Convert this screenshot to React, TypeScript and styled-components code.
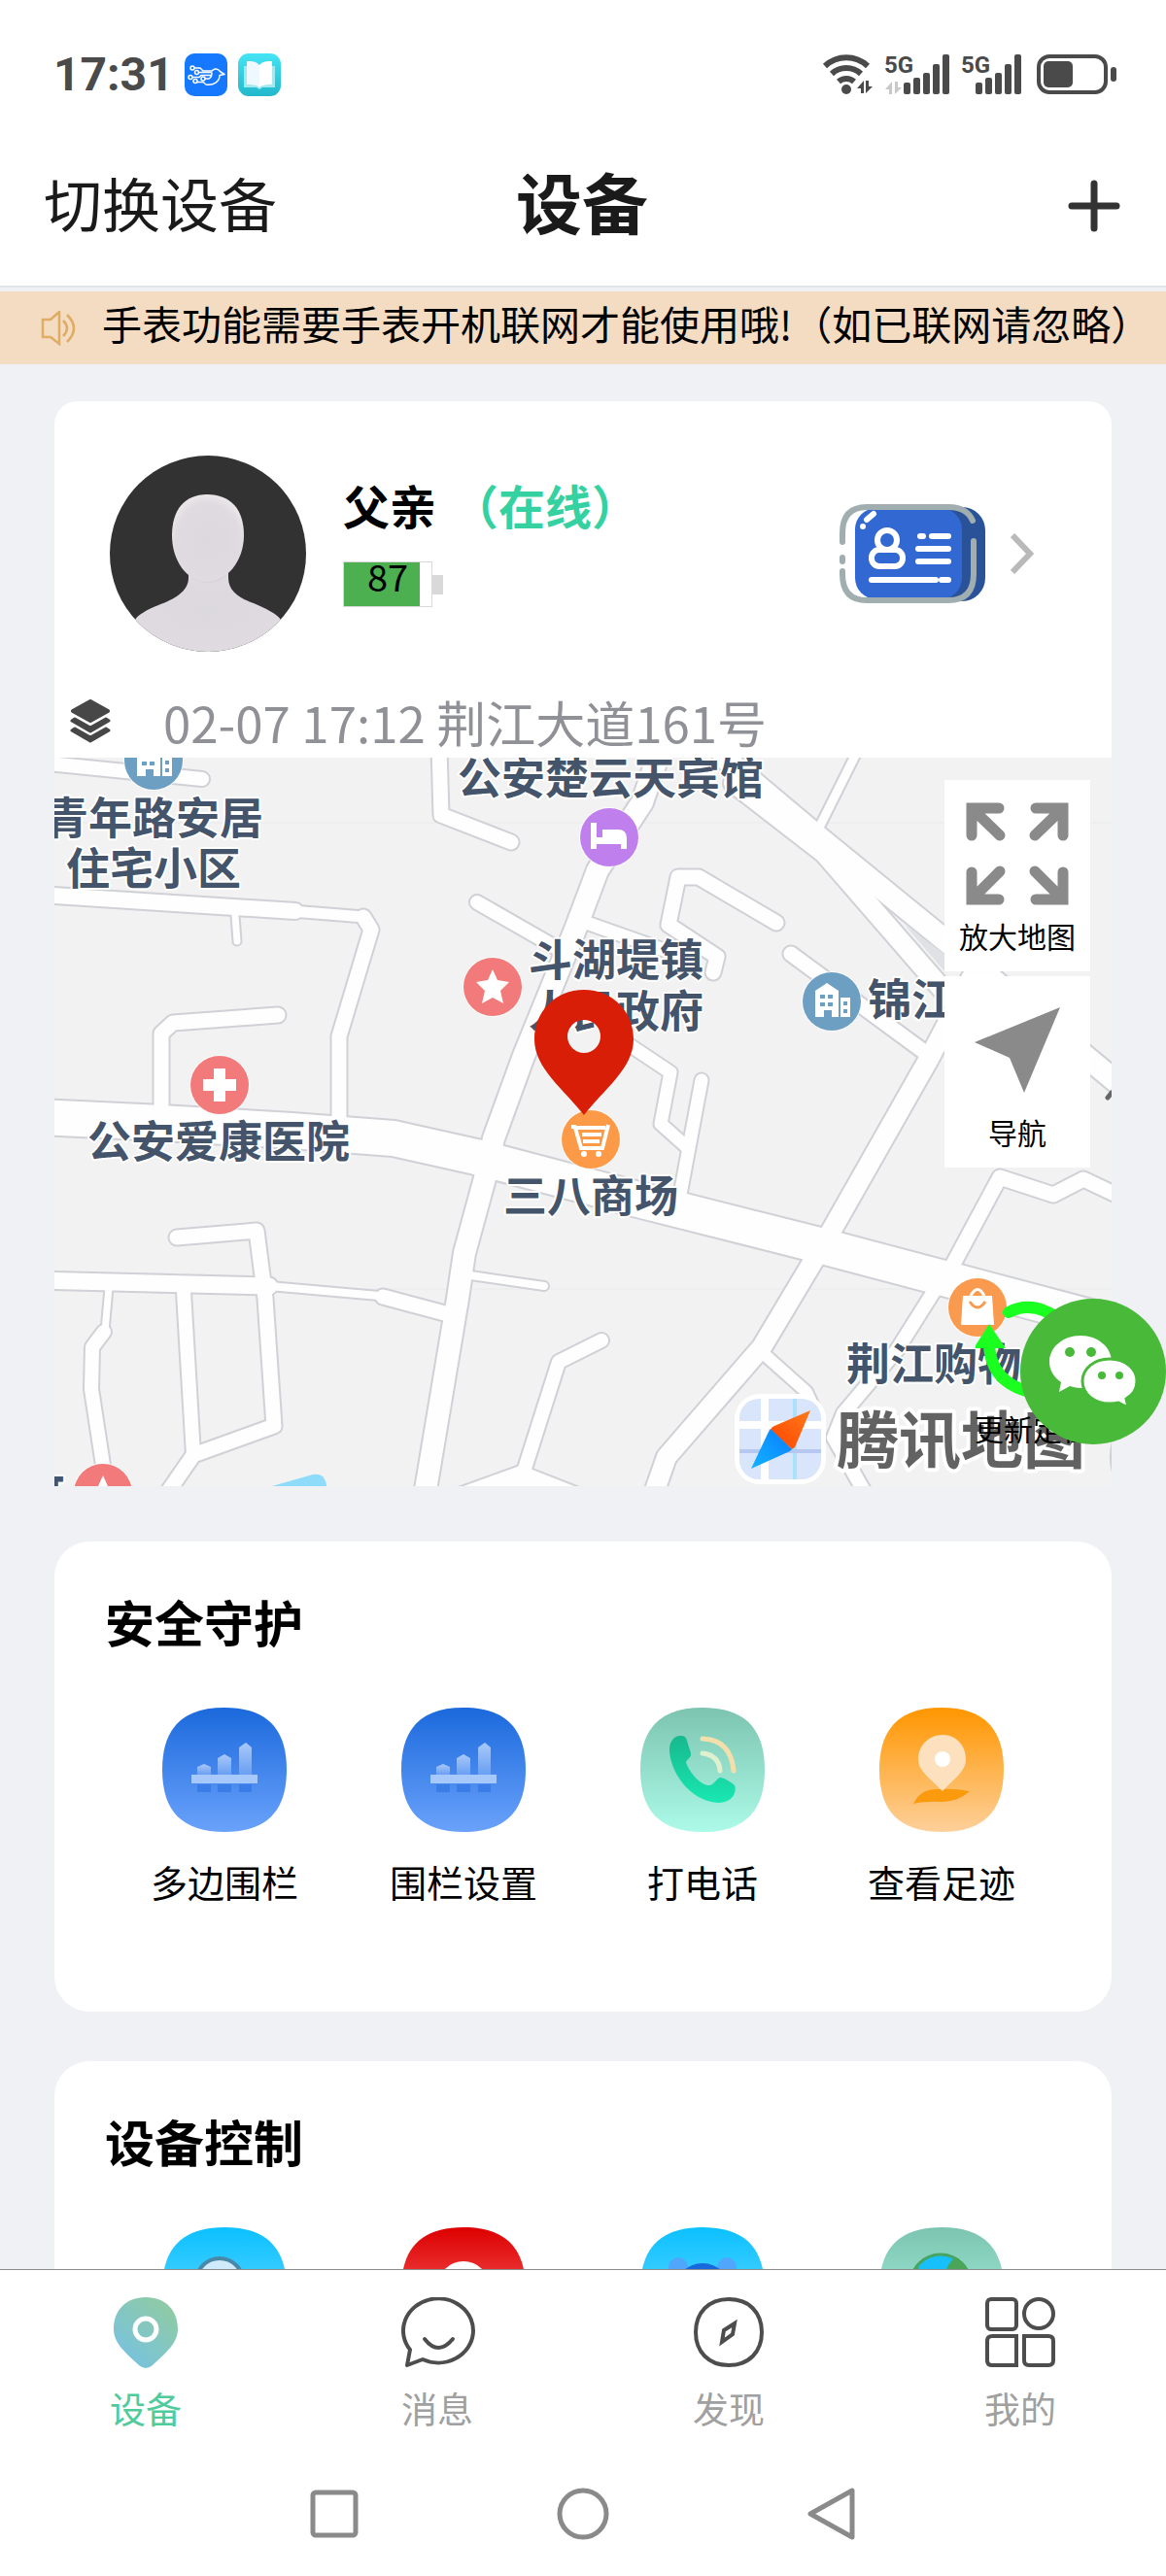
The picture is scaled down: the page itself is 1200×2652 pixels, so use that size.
import React from 'react';
import styled, { createGlobalStyle } from 'styled-components';

const GlobalStyle = createGlobalStyle`
  *, *::before, *::after { box-sizing: border-box; }
  html, body { margin: 0; padding: 0; }
  body {
    font-family: 'Noto Sans CJK SC', 'Noto Sans', sans-serif;
    color: #000;
    background: #fff;
  }
  button {
    font: inherit;
    color: inherit;
    background: none;
    border: 0;
    padding: 0;
    margin: 0;
    cursor: pointer;
  }
  h1, h2, p { margin: 0; }
  svg { display: block; flex: none; }
`;

/* ---------- shell ---------- */

const Screen = styled.div`
  display: flex;
  flex-direction: column;
  height: 100vh;
  background: #fff;
`;

const StatusBar = styled.div`
  display: flex;
  align-items: center;
  justify-content: space-between;
  height: 130px;
  padding: 23px 51px 0 55px;
  color: #4a4a4a;

  svg { overflow: visible; }
`;

const StatusGroup = styled.div<{ $gap: number }>`
  display: flex;
  align-items: center;
  gap: ${(p) => p.$gap}px;
`;

const Clock = styled.time`
  font-family: Roboto, 'Noto Sans', sans-serif;
  font-size: 48px;
  line-height: 56px;
  font-weight: 700;
`;

const Header = styled.header`
  display: grid;
  grid-template-columns: 1fr auto 1fr;
  align-items: center;
  height: 166px;
  padding: 0 47px 0 45px;
  border-bottom: 2px solid #e0e5ea;
  color: #1a1a1a;
`;

const SwitchButton = styled.button`
  justify-self: start;
  font-size: 60px;
  line-height: 80px;
  padding-bottom: 8px;
`;

const Title = styled.h1`
  font-size: 68px;
  line-height: 80px;
  font-weight: 700;
  padding-bottom: 10px;
`;

const AddButton = styled.button`
  justify-self: end;
`;

const Body = styled.main`
  position: relative;
  flex: 1;
  min-height: 0;
  display: flex;
  flex-direction: column;
  padding-top: 4px;
  background: #f0f1f5;
`;

const Notice = styled.p`
  display: flex;
  gap: 27px;
  flex: none;
  height: 75px;
  padding: 0 42px;
  background: #f3dcc2;
  font-size: 41px;
  line-height: 64px;
  white-space: nowrap;

  svg { align-self: center; }
`;

const Scroller = styled.div`
  flex: 1;
  min-height: 0;
  overflow-y: auto;
  scrollbar-width: none;
  padding: 38px 56px 56px;
`;

/* ---------- device card ---------- */

const DeviceCard = styled.section`
  background: #fff;
  border-radius: 24px 24px 0 0;
  margin-bottom: 57px;
`;

const Profile = styled.div`
  display: flex;
  gap: 38px;
  padding: 56px 80px 0 57px;
`;

const ProfileInfo = styled.div`
  flex: 1;
  padding-top: 20px;
`;

const NameLine = styled.h2`
  display: flex;
  gap: 16px;
  font-size: 48px;
  line-height: 60px;
  font-weight: 700;
`;

const Online = styled.span`
  color: #36d1a0;
`;

const Battery = styled.div`
  display: flex;
  align-items: center;
  margin-top: 29px;
`;

const BatteryShell = styled.div`
  display: grid;
  width: 92px;
  height: 47px;
  border: 1px solid #d9d9d9;

  > * { grid-area: 1 / 1; }
`;

const BatteryFill = styled.div`
  background: #4caf50;
`;

const BatteryValue = styled.span`
  justify-self: center;
  font-size: 38px;
  line-height: 28px;
`;

const BatteryNub = styled.div`
  width: 11px;
  height: 20px;
  background: #d9d9d9;
`;

const CardLink = styled.button`
  display: flex;
  align-items: center;
  gap: 26px;
`;

const Address = styled.div`
  display: flex;
  align-items: center;
  gap: 54px;
  height: 109px;
  padding: 34px 16px 0;
  font-size: 51px;
  line-height: 70px;
  color: #909196;
  white-space: nowrap;
`;

/* ---------- map ---------- */

const MapBox = styled.div`
  position: relative;
  height: 750px;
  overflow: hidden;
  background: #f1f2f1;
`;

const MapTools = styled.div`
  position: absolute;
  top: 23px;
  right: 22px;
  display: flex;
  flex-direction: column;
  align-items: flex-end;
  gap: 5px;
`;

const MapTool = styled.button<{ $clear?: boolean }>`
  display: flex;
  flex-direction: column;
  align-items: center;
  gap: 7px;
  width: ${(p) => (p.$clear ? '118px' : '150px')};
  height: 197px;
  padding-top: 17px;
  background: ${(p) => (p.$clear ? 'transparent' : '#fff')};
  font-size: 30px;
  line-height: 36px;
  white-space: nowrap;
`;

const MapToolSpace = styled.div`
  height: 98px;
`;

const ChatButton = styled.button`
  position: absolute;
  top: 1041px;
  right: 0;
  width: 150px;
  height: 150px;
`;

/* ---------- feature cards ---------- */

const FeatureCard = styled.section`
  background: #fff;
  border-radius: 36px;
  padding: 52px 52px 109px;
  margin-bottom: 51px;
`;

const FeatureTitle = styled.h2`
  font-size: 51px;
  line-height: 60px;
  font-weight: 700;
`;

const FeatureGrid = styled.div`
  display: grid;
  grid-template-columns: repeat(4, 1fr);
  margin-top: 59px;
`;

const Feature = styled.button`
  display: flex;
  flex-direction: column;
  align-items: center;
  gap: 26px;
  font-size: 38px;
  line-height: 50px;
`;

/* ---------- bottom bars ---------- */

const TabBar = styled.nav`
  display: grid;
  grid-template-columns: repeat(4, 1fr);
  padding: 28px 0 20px;
  border-top: 1px solid #8c8c8c;
  background: #fff;
`;

const Tab = styled.button<{ $active?: boolean }>`
  display: flex;
  flex-direction: column;
  align-items: center;
  gap: 16px;
  font-size: 37px;
  line-height: 50px;
  color: ${(p) => (p.$active ? '#4fcb9c' : '#a0a0a0')};
`;

const SystemNav = styled.nav`
  display: flex;
  align-items: center;
  justify-content: center;
  gap: 202px;
  height: 128px;
  background: #fff;
`;

/* ---------- status icons ---------- */

const BirdApp = () => (
  <svg width="44" height="44" viewBox="0 0 44 44">
    <rect width="44" height="44" rx="10" fill="#1677ff" />
    <g fill="none" stroke="#fff" strokeWidth="1.5" strokeLinejoin="round" strokeLinecap="round">
      <circle cx="8" cy="15" r="2" />
      <circle cx="12.5" cy="19.5" r="2" />
      <circle cx="6" cy="24.5" r="2" />
      <circle cx="11" cy="28.5" r="2" />
      <circle cx="19" cy="26" r="2" />
      <path d="M10 15h6l3 3h9c3-3 6-2.500 9 1l4 2.500-5 1C36 29 30 33 22 32l-3-2.500h-6" />
      <path d="M14.500 19.500H27M8 24.500h7l2-2h10M21 26h4c2-1 3-3 3-6" />
    </g>
  </svg>
);

const BookApp = () => (
  <svg width="44" height="44" viewBox="0 0 44 44">
    <defs>
      <linearGradient id="book" x1="0" y1="0" x2="0" y2="1">
        <stop offset="0" stopColor="#45e4f5" />
        <stop offset="1" stopColor="#22b8cb" />
      </linearGradient>
    </defs>
    <rect width="44" height="44" rx="11" fill="url(#book)" />
    <path d="M6 13h32v22H25l-3 2-3-2H6z" fill="#a5e9f0" />
    <path d="M9 8c5 0 10 0 13 4v23c-3-3-8-3-13-3z" fill="#eef9ff" />
    <path d="M35 8c-5 0-10 0-13 4v23c3-3 8-3 13-3z" fill="#fff" />
  </svg>
);

const Wifi = () => (
  <svg width="51" height="41" viewBox="0 0 51 41">
    <g fill="none" stroke="#4a4a4a" strokeWidth="6">
      <path d="M2 12A32 32 0 0 1 46 12" />
      <path d="M9 20A22 22 0 0 1 39 20" />
      <path d="M16 28A12 12 0 0 1 32 28" />
    </g>
    <circle cx="24" cy="36" r="5" fill="#4a4a4a" />
    <path d="M42 27v13h-3v-5h-4zM44 27h3v6h4l-7 7z" fill="#4a4a4a" />
  </svg>
);

const Signal = ({ start, data }: { start: number; data?: boolean }) => (
  <svg width={start + 47} height="41" viewBox={`0 0 ${start + 47} 41`}>
    <text x="0" y="19" fontFamily="Roboto, sans-serif" fontSize="24" fontWeight="700" fill="#4a4a4a">5G</text>
    {data && <path d="M8 28v13H5v-5H1zM11 28h3v6h4l-7 7z" fill="#c8c8c8" />}
    {[12, 17, 22, 31, 41].map((h, i) => (
      <rect key={h} x={start + i * 10} y={41 - h} width="7" height={h} rx="2" fill="#4a4a4a" />
    ))}
  </svg>
);

const PhoneBattery = () => (
  <svg width="86" height="41" viewBox="-4 0 86 41">
    <rect x="2" y="2" width="69" height="37" rx="11" fill="none" stroke="#4a4a4a" strokeWidth="4" />
    <rect x="7" y="7" width="30" height="27" rx="5" fill="#4a4a4a" />
    <rect x="76" y="13" width="6" height="15" rx="3" fill="#4a4a4a" />
  </svg>
);

/* ---------- header and profile icons ---------- */

const Plus = () => (
  <svg width="54" height="54" viewBox="0 0 54 54" stroke="#333" strokeWidth="7" strokeLinecap="round">
    <path d="M27 4v46M4 27h46" />
  </svg>
);

const Speaker = () => (
  <svg width="36" height="36" viewBox="0 0 36 36" fill="none" stroke="#e0ab62" strokeWidth="2.5">
    <path d="M2 9h8l9-8v33L10 27H2z" />
    <path d="M23 10q8 8 0 16M27 4q14 14 0 28" />
  </svg>
);

const Avatar = () => (
  <svg width="202" height="202" viewBox="0 0 202 202">
    <defs>
      <clipPath id="face"><circle cx="101" cy="101" r="101" /></clipPath>
      <radialGradient id="skin" cx="0.5" cy="0.55" r="0.6">
        <stop offset="0" stopColor="#dbd8de" />
        <stop offset="0.75" stopColor="#dfdbe0" />
        <stop offset="1" stopColor="#f1ecec" />
      </radialGradient>
    </defs>
    <g clipPath="url(#face)">
      <rect width="202" height="202" fill="#323232" />
      <path
        d="M81 108v18c0 14-15 22-31 28-12 5-20 9-24 15L10 202h180l-14-33c-4-6-16-12-28-17-14-5-26-12-26-26v-18z"
        fill="url(#skin)"
      />
      <path d="M82 124q19 14 38 0l2-10H81z" fill="#cfccd1" opacity="0.6" />
      <path
        d="M100 40c25 0 38 16 38 42 0 27-18 48-38 48S64 109 64 82c0-26 13-42 36-42z"
        fill="url(#skin)"
      />
    </g>
  </svg>
);

const IdCard = () => (
  <svg width="150" height="102" viewBox="0 0 150 102" fill="none" strokeLinecap="round">
    <rect x="40" y="3" width="110" height="97" rx="24" fill="#2a5298" />
    <rect x="16" y="4" width="110" height="94" rx="22" fill="#3268d2" />
    <g stroke="#a0aeb0" strokeWidth="6">
      <path d="M3 39V30Q3 3 28 3H112Q131 3 137 17" />
      <path d="M138 38V72Q138 99 112 99H28Q3 99 3 72V69" />
      <path d="M3 55V59" />
    </g>
    <g stroke="#fff" strokeWidth="6">
      <path d="M28 16L35 10M24 23h0M83 33h3M95 33h17M81 46h31M81 59h31M33 78h66M105 78h7" />
      <circle cx="49" cy="37" r="10" />
      <rect x="33" y="47" width="32" height="17" rx="8" fill="#3268d2" />
    </g>
  </svg>
);

const Chevron = () => (
  <svg width="24" height="42" viewBox="0 0 24 42" fill="none" stroke="#b9b9b9" strokeWidth="6">
    <path d="M2 2l18 19L2 40" />
  </svg>
);

const Layers = () => (
  <svg width="42" height="45" viewBox="0 0 42 45" fill="#474747" stroke="#474747" strokeLinejoin="round">
    <path d="M21 2l18 10-18 10L3 12z" strokeWidth="4" />
    <path d="M2 22l3-2 16 9 16-9 3 2-19 11z" strokeWidth="3" />
    <path d="M2 32l3-2 16 9 16-9 3 2-19 11z" strokeWidth="3" />
  </svg>
);

/* ---------- map drawing ---------- */

type Road = [string, number];

const roads: Road[] = [
  ['M40 785L208 802', 14],
  ['M40 921L304 938', 16],
  ['M300 938L375 944', 11],
  ['M374 944L382 957L349 1067V1156', 15],
  ['M242 942L244 969', 7],
  ['M166 1150V1064L178 1053L286 1045', 15],
  ['M680 770L661 826L615 896L592 957L539 1087L508 1172L499 1213L478 1290L471 1337L437 1540', 22],
  ['M484 1313L560 1324', 8],
  ['M40 1318L277 1324', 17],
  ['M277 1324L390 1334', 8],
  ['M394 1335L465 1354', 15],
  ['M182 1274L264 1267L273 1337L282 1468L199 1498L170 1540', 15],
  ['M189 1330L199 1498', 14],
  ['M112 1326L108 1370', 7],
  ['M107 1371L95 1387L94 1430L107 1515', 14],
  ['M619 1380L575 1402L539 1515L470 1540M539 1517L610 1545', 14],
  ['M452 770L454 839L526 867', 15],
  ['M491 929L573 976', 14],
  ['M598 948L700 984', 13],
  ['M745 780L845 864L985 978L1160 1123', 22],
  ['M755 806L848 878L985 1036', 20],
  ['M884 770L843 852', 9],
  ['M799 950L719 903H698L688 952L738 985L734 1001', 15],
  ['M814 982L954 1085', 15],
  ['M1000 1006L956 1090L855 1268L784 1387L686 1500L672 1540', 20],
  ['M645 1074L690 1104L680 1157L708 1182', 13],
  ['M722 1112L699 1235', 13],
  ['M1155 1233L1115 1214L1084 1230L1029 1212L979 1305', 15],
  ['M962 1328L923 1390L868 1455L858 1480L892 1540', 14],
  ['M784 1392L830 1433L838 1450', 12],
  ['M1158 1470Q1142 1500 1158 1530', 12],
  ['M40 1150L166 1156L300 1164L405 1172L490 1191L657 1235L843 1282L1160 1366', 36],
];

const StarMark = () => (
  <path d="M0-18l5 11 12 2-9 9 3 13-11-6-11 6 3-13-9-9 12-2z" fill="#fff" />
);

const BuildingMark = () => (
  <>
    <path d="M-17 16v-27L-5-19 7-11v27H0V9h-8v7zM9-4h10v20H9z" fill="#fff" />
    <path d="M-12-7h5v4h-5zM-4-7h5v4h-5zM-12 1h5v4h-5zM-4 1h5v4h-5zM12 0h4v4h-4zM12 8h4v4h-4z" fill="#6d9fc3" />
  </>
);

const Poi = ({ x, y, color, children }: { x: number; y: number; color: string; children: React.ReactNode }) => (
  <g transform={`translate(${x} ${y})`}>
    <circle r="31" fill="#fff" opacity="0.7" />
    <circle r="30" fill={color} />
    {children}
  </g>
);

const labels: [number, number, string][] = [
  [46, 859, '青年路安居'],
  [68, 911, '住宅小区'],
  [471, 818, '公安楚云天宾馆'],
  [90, 1192, '公安爱康医院'],
  [544, 1005, '斗湖堤镇'],
  [544, 1058, '人民政府'],
  [893, 1046, '锦江'],
  [518, 1248, '三八商场'],
  [871, 1421, '荆江购物'],
  [22, 1556, '可'],
];

const MapDrawing = () => (
  <svg width="100%" height="100%" viewBox="56 780 1088 750" preserveAspectRatio="xMidYMid slice">
    <defs>
      <clipPath id="logoTile"><rect x="761" y="1440" width="84" height="83" rx="20" /></clipPath>
      <linearGradient id="needleHot" x1="1" y1="0" x2="0" y2="1">
        <stop offset="0" stopColor="#ff7a1a" />
        <stop offset="1" stopColor="#ff4400" />
      </linearGradient>
      <linearGradient id="needleCold" x1="1" y1="0" x2="0" y2="1">
        <stop offset="0" stopColor="#0a7cff" />
        <stop offset="1" stopColor="#12b4ff" />
      </linearGradient>
    </defs>
    <path d="M56 847H1144M56 1327H1144" stroke="#e9eaea" />
    <g fill="none" strokeLinecap="round" strokeLinejoin="round">
      {roads.map(([d, w]) => <path key={d} d={d} stroke="#d0d1d7" strokeWidth={w + 4} />)}
      {roads.map(([d, w]) => <path key={d} d={d} stroke="#fefefe" strokeWidth={w} />)}
    </g>
    <path d="M500 1530L537 1512L575 1530z" fill="#fefefe" />
    <path d="M931 952L973 1001V983z" fill="#dfe1e5" />
    <path d="M280 1530l42-12q13-2 14 12z" fill="#8fdcfa" />
    <path d="M1140 1130l4-5" stroke="#666" strokeWidth="5" strokeLinecap="round" />

    <Poi x={158} y={783} color="#6d9fc3"><BuildingMark /></Poi>
    <Poi x={856} y={1031} color="#6d9fc3"><BuildingMark /></Poi>
    <Poi x={627} y={862} color="#bf80ee">
      <path d="M-19-15h6V0h6v-8H9q9 0 9 9v11h-6V7h-25v5h-6z" fill="#fff" />
    </Poi>
    <Poi x={507} y={1016} color="#f27a7a"><StarMark /></Poi>
    <Poi x={106} y={1537} color="#f27a7a"><StarMark /></Poi>
    <Poi x={226} y={1117} color="#f27a7a">
      <path d="M-6-17H6V-6H17V6H6V17H-6V6H-17V-6H-6z" fill="#fff" />
    </Poi>
    <Poi x={608} y={1173} color="#fd9a48">
      <path d="M-20-13h5M18-15l-6 24H-10L-16-12H15M-9-5H11M-8 2H9" fill="none" stroke="#fff" strokeWidth="4" />
      <circle cx="-7" cy="15" r="3" fill="#fff" />
      <circle cx="8" cy="15" r="3" fill="#fff" />
    </Poi>
    <Poi x={1006} y={1346} color="#f99a4e">
      <path d="M-15-12H15l2 30H-17z" fill="#fff" />
      <path d="M-7-12q7-13 14 0" fill="none" stroke="#fff" strokeWidth="3" />
      <path d="M-8-6Q0 6 8-6" fill="none" stroke="#f99a4e" strokeWidth="3" />
    </Poi>

    <g fontFamily="'Noto Sans CJK SC', sans-serif" fontSize="45" fontWeight="700" fill="#44546a"
      stroke="#fff" strokeWidth="4" strokeLinejoin="round" paintOrder="stroke">
      {labels.map(([x, y, t]) => <text key={t} x={x} y={y}>{t}</text>)}
    </g>

    <path
      d="M601 1019C571 1019 550 1042 550 1070C550 1100 581 1122 601 1148C621 1122 652 1100 652 1070C652 1042 631 1019 601 1019ZM601 1050A17 17 0 1 1 601 1084A17 17 0 1 1 601 1050Z"
      fill="#d81e06"
      fillRule="evenodd"
    />

    <rect x="756" y="1435" width="94" height="93" rx="26" fill="#fff" />
    <g clipPath="url(#logoTile)">
      <rect x="761" y="1440" width="84" height="83" fill="#d9e5fb" />
      <path d="M787 1440V1523M761 1467H845" stroke="#fff" strokeWidth="8" />
      <path d="M818 1440V1523" stroke="#a9e2fa" strokeWidth="4" />
      <path d="M761 1494H845" stroke="#b7c8f0" strokeWidth="4" />
    </g>
    <path d="M834 1452L797 1468Q794 1469 793 1472L815 1492L818 1490z" fill="url(#needleHot)" />
    <path d="M793 1471L815 1492L813 1494L773 1512L791 1474z" fill="url(#needleCold)" />
    <text x="861" y="1506" fontFamily="'Noto Sans CJK SC', sans-serif" fontSize="64" fontWeight="700"
      fill="#626262" stroke="#fff" strokeWidth="8" strokeLinejoin="round" paintOrder="stroke">腾讯地图</text>
  </svg>
);

const Expand = () => (
  <svg width="118" height="118" viewBox="-6 -6 118 118" fill="none" stroke="#8a8a8a" strokeWidth="11" strokeLinecap="round" strokeLinejoin="miter">
    <path d="M34 6H6V34M6 6L35 34" />
    <path d="M72 6H100V34M100 6L71 34" />
    <path d="M34 100H6V72M6 100L35 71" />
    <path d="M72 100H100V72M100 100L71 71" />
  </svg>
);

const Navigate = () => (
  <svg width="118" height="118" viewBox="0 0 118 118" fill="#8a8a8a">
    <path d="M103 15L15 51L51 67L66 103z" />
  </svg>
);

const Refresh = () => (
  <svg width="118" height="118" viewBox="0 0 118 118" fill="none" stroke="#1aff1f" strokeWidth="12">
    <path d="M34 24Q60 10 90 34" strokeLinecap="round" />
    <path d="M14 58Q16 96 56 106" />
    <path d="M14 36l17 25H-2z" fill="#1aff1f" stroke="none" />
  </svg>
);

const Chat = () => (
  <svg width="150" height="150" viewBox="0 0 150 150">
    <circle cx="75" cy="75" r="75" fill="#48b938" />
    <path d="M62 38c-18 0-32 12-32 27 0 9 5 16 12 21l-2 10 11-6q6 2 11 2c18 0 32-12 32-27S80 38 62 38z" fill="#fff" />
    <path
      d="M92 62c-16 0-28 10-28 23s12 23 28 23q5 0 9-1l10 5-2-9c7-4 11-10 11-18 0-13-12-23-28-23z"
      fill="#fff" stroke="#48b938" strokeWidth="3"
    />
    <g fill="#48b938">
      <circle cx="51" cy="55" r="5" />
      <circle cx="73" cy="55" r="5" />
      <circle cx="84" cy="79" r="4" />
      <circle cx="102" cy="79" r="4" />
    </g>
  </svg>
);

/* ---------- feature icons ---------- */

const Tile = ({ id, from, to, children }: { id: string; from: string; to: string; children?: React.ReactNode }) => (
  <svg width="128" height="128" viewBox="0 0 128 128">
    <defs>
      <linearGradient id={id} x1="0" y1="0" x2="0" y2="1">
        <stop offset="0" stopColor={from} />
        <stop offset="1" stopColor={to} />
      </linearGradient>
    </defs>
    <path d="M64 0C107 0 128 21 128 64S107 128 64 128 0 107 0 64 21 0 64 0Z" fill={`url(#${id})`} />
    {children}
  </svg>
);

const FenceTile = ({ id }: { id: string }) => (
  <Tile id={id} from="#1b69dc" to="#6aa2fb">
    <defs>
      <linearGradient id={`${id}-post`} x1="0" y1="0" x2="0" y2="1">
        <stop offset="0" stopColor="#a9c9fa" />
        <stop offset="1" stopColor="#6a9ff2" />
      </linearGradient>
    </defs>
    <g fill={`url(#${id}-post)`}>
      <path d="M36 61l7-3 7 3v8H36z" />
      <path d="M57 52l7-4 7 4v17H57z" />
      <path d="M79 41l7-5 6 5v28H79z" />
    </g>
    <path d="M36 79h14v8H36zM57 79h14v8H57zM79 79h13v8H79z" fill="#3a7de6" />
    <path d="M30 69h68v9H30z" fill="#a6c8fa" />
  </Tile>
);

const CallTile = () => (
  <Tile id="call" from="#7cc4b0" to="#acfae8">
    <defs>
      <linearGradient id="handset" x1="0" y1="0" x2="0" y2="1">
        <stop offset="0" stopColor="#17b88d" />
        <stop offset="1" stopColor="#19e8b2" />
      </linearGradient>
    </defs>
    <path
      d="M30 43c0-8 5-14 11-14 4 0 6 1 7 5l4 13c1 4-4 6-5 9 2 9 15 24 23 24 5 1 8-7 12-8 4 0 12 5 15 8 2 3 1 18-17 18-30-2-50-33-50-55z"
      fill="url(#handset)"
    />
    <g fill="none" strokeWidth="5" strokeLinecap="round">
      <path d="M64 47q17 2 18 18" stroke="#dff0cf" />
      <path d="M64 32q29 1 32 33" stroke="#f3dfac" />
    </g>
  </Tile>
);

const TrackTile = () => (
  <Tile id="track" from="#ff9600" to="#fdd09a">
    <path d="M35 99q7-15 24-15 18-1 34 2-10 10-28 11-18-1-30 2z" fill="#fb9a0c" />
    <path d="M65 28c-14 0-25 11-25 25 0 13 13 20 25 33 12-13 24-20 24-33 0-14-10-25-24-25z" fill="#fde0bd" />
    <circle cx="65" cy="53" r="8" fill="#fff" />
  </Tile>
);

const FindTile = () => (
  <Tile id="find" from="#0cc0ff" to="#7ee0ff">
    <circle cx="59" cy="56" r="24" fill="#cfeafb" stroke="#4a88a8" strokeWidth="4" />
    <path d="M77 74l16 16" stroke="#4a88a8" strokeWidth="8" strokeLinecap="round" />
  </Tile>
);

const PowerTile = () => (
  <Tile id="power" from="#dd0000" to="#ff8080">
    <circle cx="64" cy="62" r="27" fill="#fff" />
  </Tile>
);

const AlarmTile = () => (
  <Tile id="alarm" from="#0cc0ff" to="#7ee0ff">
    <circle cx="39" cy="41" r="10" fill="#4fa6fa" />
    <circle cx="89" cy="41" r="10" fill="#4fa6fa" />
    <circle cx="64" cy="66" r="29" fill="#1767dd" />
    <circle cx="64" cy="66" r="21" fill="#fff" />
  </Tile>
);

const GlobeTile = () => (
  <Tile id="globe" from="#7cc4b0" to="#acfae8">
    <circle cx="63" cy="59" r="31" fill="#17c0fa" stroke="#46a560" strokeWidth="3" />
    <path d="M78 31q-12 10-10 24l24 10q6-24-14-34zM34 48l6-8 4 30-4 8q-10-14-6-30z" fill="#4aa558" />
  </Tile>
);

/* ---------- tab icons ---------- */

const DeviceTab = () => (
  <svg width="66" height="73" viewBox="0 0 66 73">
    <defs>
      <linearGradient id="devicePin" x1="1" y1="0" x2="0.200" y2="1">
        <stop offset="0.100" stopColor="#90cba2" />
        <stop offset="1" stopColor="#76c2e2" />
      </linearGradient>
    </defs>
    <path
      d="M33 0C54 0 66 14 66 33C66 47 54 57 40 70Q33 76 26 70C12 57 0 47 0 33C0 14 12 0 33 0Z"
      fill="url(#devicePin)"
    />
    <circle cx="33" cy="33" r="11" fill="none" stroke="#fff" strokeWidth="5" />
  </svg>
);

const MessageTab = () => (
  <svg width="77" height="73" viewBox="0 0 77 73" fill="none" stroke="#4d4d4d" strokeWidth="4" strokeLinejoin="round" strokeLinecap="round">
    <path d="M10 54A36 33 0 1 1 23 64L7 70z" />
    <path d="M25 43q14 18 29 0" />
  </svg>
);

const DiscoverTab = () => (
  <svg width="72" height="73" viewBox="0 0 72 73" fill="none" stroke="#4d4d4d" strokeWidth="4">
    <path d="M36 2C57 2 70 16 70 36S57 70 36 70 2 56 2 36 15 2 36 2Z" />
    <path d="M42 27L40 38L29 46L31 34z" />
  </svg>
);

const MineTab = () => (
  <svg width="73" height="73" viewBox="0 0 73 73" fill="none" stroke="#4d4d4d" strokeWidth="4">
    <rect x="2" y="2" width="30" height="31" rx="4" />
    <circle cx="55" cy="17" r="15" />
    <path d="M32 40V70H7Q2 70 2 65V45Q2 40 7 40z" />
    <path d="M40 40H65Q70 40 70 45V65Q70 70 65 70H45Q40 70 40 65z" />
  </svg>
);

const tabs = [
  { label: '设备', icon: <DeviceTab />, active: true },
  { label: '消息', icon: <MessageTab /> },
  { label: '发现', icon: <DiscoverTab /> },
  { label: '我的', icon: <MineTab /> },
];

const safety = [
  { label: '多边围栏', icon: <FenceTile id="fence-a" /> },
  { label: '围栏设置', icon: <FenceTile id="fence-b" /> },
  { label: '打电话', icon: <CallTile /> },
  { label: '查看足迹', icon: <TrackTile /> },
];

const controls = [
  { name: '查找', icon: <FindTile /> },
  { name: '关机', icon: <PowerTile /> },
  { name: '闹钟', icon: <AlarmTile /> },
  { name: '网络', icon: <GlobeTile /> },
];

const charge = 87;

export default function App() {
  return (
    <Screen>
      <GlobalStyle />
      <StatusBar>
        <StatusGroup $gap={11}>
          <Clock>17:31</Clock>
          <BirdApp />
          <BookApp />
        </StatusGroup>
        <StatusGroup $gap={12}>
          <Wifi />
          <Signal start={20} data />
          <Signal start={15} />
          <PhoneBattery />
        </StatusGroup>
      </StatusBar>

      <Header>
        <SwitchButton>切换设备</SwitchButton>
        <Title>设备</Title>
        <AddButton aria-label="添加"><Plus /></AddButton>
      </Header>

      <Body>
        <Notice>
          <Speaker />
          手表功能需要手表开机联网才能使用哦!（如已联网请忽略）
        </Notice>

        <Scroller>
          <DeviceCard>
            <Profile>
              <Avatar />
              <ProfileInfo>
                <NameLine>父亲<Online>（在线）</Online></NameLine>
                <Battery>
                  <BatteryShell>
                    <BatteryFill style={{ width: `${charge}%` }} />
                    <BatteryValue>{charge}</BatteryValue>
                  </BatteryShell>
                  <BatteryNub />
                </Battery>
              </ProfileInfo>
              <CardLink aria-label="设备资料">
                <IdCard />
                <Chevron />
              </CardLink>
            </Profile>
            <Address>
              <Layers />
              02-07 17:12 荆江大道161号
            </Address>
            <MapBox>
              <MapDrawing />
              <MapTools>
                <MapTool><Expand />放大地图</MapTool>
                <MapTool><Navigate />导航</MapTool>
                <MapToolSpace />
                <MapTool $clear><Refresh />更新定位</MapTool>
              </MapTools>
            </MapBox>
          </DeviceCard>

          <FeatureCard>
            <FeatureTitle>安全守护</FeatureTitle>
            <FeatureGrid>
              {safety.map((f) => (
                <Feature key={f.label}>{f.icon}{f.label}</Feature>
              ))}
            </FeatureGrid>
          </FeatureCard>

          <FeatureCard>
            <FeatureTitle>设备控制</FeatureTitle>
            <FeatureGrid>
              {controls.map((f) => (
                <Feature key={f.name} aria-label={f.name}>{f.icon}</Feature>
              ))}
            </FeatureGrid>
          </FeatureCard>
        </Scroller>

        <ChatButton aria-label="微信"><Chat /></ChatButton>
      </Body>

      <TabBar>
        {tabs.map((t) => (
          <Tab key={t.label} $active={t.active}>{t.icon}{t.label}</Tab>
        ))}
      </TabBar>

      <SystemNav>
        <button aria-label="最近任务">
          <svg width="54" height="54" viewBox="0 0 54 54" fill="none" stroke="#8a8a8a" strokeWidth="5">
            <rect x="5" y="5" width="44" height="44" rx="3" />
          </svg>
        </button>
        <button aria-label="主屏幕">
          <svg width="54" height="54" viewBox="0 0 54 54" fill="none" stroke="#8a8a8a" strokeWidth="5">
            <circle cx="27" cy="27" r="24" />
          </svg>
        </button>
        <button aria-label="返回">
          <svg width="54" height="54" viewBox="0 0 54 54" fill="none" stroke="#8a8a8a" strokeWidth="5" strokeLinejoin="round">
            <path d="M48 3V51L5 27z" />
          </svg>
        </button>
      </SystemNav>
    </Screen>
  );
}
